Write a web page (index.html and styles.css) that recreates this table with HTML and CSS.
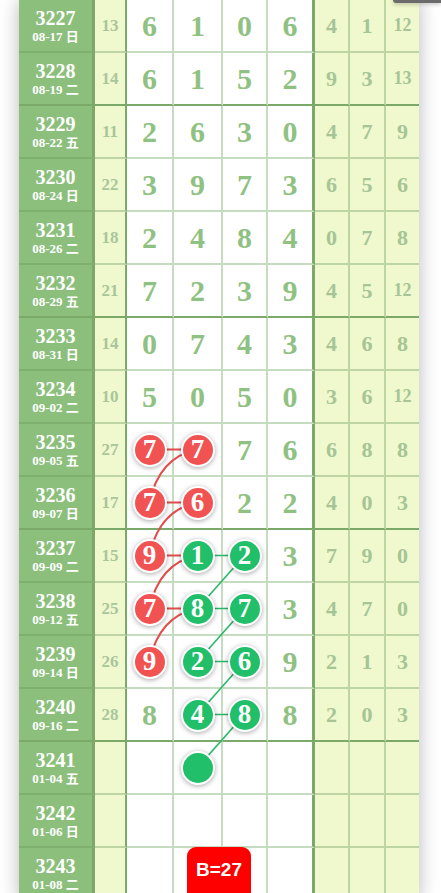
FILE: index.html
```html
<!DOCTYPE html>
<html lang="zh">
<head>
  <meta charset="UTF-8" />
  <meta name="viewport" content="width=device-width, initial-scale=1.0" />
  <title>走势图</title>
  <link rel="stylesheet" href="styles.css">
</head>
<body>
  <div class="topbtn"></div>

  <div class="board">
    <div class="row">
      <div class="c id"><b>3227</b><small>08-17 日</small></div>
      <div class="c sum">13</div>
      <div class="c n">6</div><div class="c n">1</div><div class="c n">0</div><div class="c n last">6</div>
      <div class="c r">4</div><div class="c r">1</div><div class="c r end two">12</div>
    </div>
    <div class="row grp">
      <div class="c id"><b>3228</b><small>08-19 二</small></div>
      <div class="c sum">14</div>
      <div class="c n">6</div><div class="c n">1</div><div class="c n">5</div><div class="c n last">2</div>
      <div class="c r">9</div><div class="c r">3</div><div class="c r end two">13</div>
    </div>
    <div class="row">
      <div class="c id"><b>3229</b><small>08-22 五</small></div>
      <div class="c sum">11</div>
      <div class="c n">2</div><div class="c n">6</div><div class="c n">3</div><div class="c n last">0</div>
      <div class="c r">4</div><div class="c r">7</div><div class="c r end">9</div>
    </div>
    <div class="row">
      <div class="c id"><b>3230</b><small>08-24 日</small></div>
      <div class="c sum">22</div>
      <div class="c n">3</div><div class="c n">9</div><div class="c n">7</div><div class="c n last">3</div>
      <div class="c r">6</div><div class="c r">5</div><div class="c r end">6</div>
    </div>
    <div class="row">
      <div class="c id"><b>3231</b><small>08-26 二</small></div>
      <div class="c sum">18</div>
      <div class="c n">2</div><div class="c n">4</div><div class="c n">8</div><div class="c n last">4</div>
      <div class="c r">0</div><div class="c r">7</div><div class="c r end">8</div>
    </div>
    <div class="row grp">
      <div class="c id"><b>3232</b><small>08-29 五</small></div>
      <div class="c sum">21</div>
      <div class="c n">7</div><div class="c n">2</div><div class="c n">3</div><div class="c n last">9</div>
      <div class="c r">4</div><div class="c r">5</div><div class="c r end two">12</div>
    </div>
    <div class="row">
      <div class="c id"><b>3233</b><small>08-31 日</small></div>
      <div class="c sum">14</div>
      <div class="c n">0</div><div class="c n">7</div><div class="c n">4</div><div class="c n last">3</div>
      <div class="c r">4</div><div class="c r">6</div><div class="c r end">8</div>
    </div>
    <div class="row">
      <div class="c id"><b>3234</b><small>09-02 二</small></div>
      <div class="c sum">10</div>
      <div class="c n">5</div><div class="c n">0</div><div class="c n">5</div><div class="c n last">0</div>
      <div class="c r">3</div><div class="c r">6</div><div class="c r end two">12</div>
    </div>
    <div class="row">
      <div class="c id"><b>3235</b><small>09-05 五</small></div>
      <div class="c sum">27</div>
      <div class="c n"><span class="ball red">7</span></div><div class="c n"><span class="ball red">7</span></div><div class="c n">7</div><div class="c n last">6</div>
      <div class="c r">6</div><div class="c r">8</div><div class="c r end">8</div>
    </div>
    <div class="row grp">
      <div class="c id"><b>3236</b><small>09-07 日</small></div>
      <div class="c sum">17</div>
      <div class="c n"><span class="ball red">7</span></div><div class="c n"><span class="ball red">6</span></div><div class="c n">2</div><div class="c n last">2</div>
      <div class="c r">4</div><div class="c r">0</div><div class="c r end">3</div>
    </div>
    <div class="row">
      <div class="c id"><b>3237</b><small>09-09 二</small></div>
      <div class="c sum">15</div>
      <div class="c n"><span class="ball red">9</span></div><div class="c n"><span class="ball green">1</span></div><div class="c n"><span class="ball green">2</span></div><div class="c n last">3</div>
      <div class="c r">7</div><div class="c r">9</div><div class="c r end">0</div>
    </div>
    <div class="row">
      <div class="c id"><b>3238</b><small>09-12 五</small></div>
      <div class="c sum">25</div>
      <div class="c n"><span class="ball red">7</span></div><div class="c n"><span class="ball green">8</span></div><div class="c n"><span class="ball green">7</span></div><div class="c n last">3</div>
      <div class="c r">4</div><div class="c r">7</div><div class="c r end">0</div>
    </div>
    <div class="row">
      <div class="c id"><b>3239</b><small>09-14 日</small></div>
      <div class="c sum">26</div>
      <div class="c n"><span class="ball red">9</span></div><div class="c n"><span class="ball green">2</span></div><div class="c n"><span class="ball green">6</span></div><div class="c n last">9</div>
      <div class="c r">2</div><div class="c r">1</div><div class="c r end">3</div>
    </div>
    <div class="row grp">
      <div class="c id"><b>3240</b><small>09-16 二</small></div>
      <div class="c sum">28</div>
      <div class="c n">8</div><div class="c n"><span class="ball green">4</span></div><div class="c n"><span class="ball green">8</span></div><div class="c n last">8</div>
      <div class="c r">2</div><div class="c r">0</div><div class="c r end">3</div>
    </div>
    <div class="row">
      <div class="c id"><b>3241</b><small>01-04 五</small></div>
      <div class="c sum"></div>
      <div class="c n"></div><div class="c n"><span class="ball green"></span></div><div class="c n"></div><div class="c n last"></div>
      <div class="c r"></div><div class="c r"></div><div class="c r end"></div>
    </div>
    <div class="row">
      <div class="c id"><b>3242</b><small>01-06 日</small></div>
      <div class="c sum"></div>
      <div class="c n"></div><div class="c n"></div><div class="c n"></div><div class="c n last"></div>
      <div class="c r"></div><div class="c r"></div><div class="c r end"></div>
    </div>
    <div class="row">
      <div class="c id"><b>3243</b><small>01-08 二</small></div>
      <div class="c sum"></div>
      <div class="c n"></div><div class="c n"></div><div class="c n"></div><div class="c n last"></div>
      <div class="c r"></div><div class="c r"></div><div class="c r end"></div>
    </div>

    <!-- connecting lines, board coordinates -->
    <svg class="links" width="400" height="901" viewBox="0 0 400 901">
      <g stroke="#e44c4c" stroke-width="2" fill="none">
        <line x1="130.5" y1="449.5" x2="178.5" y2="449.5"/>
        <line x1="130.5" y1="502.5" x2="178.5" y2="502.5"/>
        <line x1="130.5" y1="555.5" x2="178.5" y2="555.5"/>
        <line x1="130.5" y1="608.5" x2="178.5" y2="608.5"/>
        <path d="M178.5 449.5 Q140 457 130.5 502.5"/>
        <path d="M178.5 502.5 Q140 510 130.5 555.5"/>
        <path d="M178.5 555.5 Q140 563 130.5 608.5"/>
        <path d="M178.5 608.5 Q140 616 130.5 661.5"/>
      </g>
      <g stroke="#27b868" stroke-width="1.6" fill="none">
        <line x1="178.5" y1="555.5" x2="225.5" y2="555.5"/>
        <line x1="178.5" y1="608.5" x2="225.5" y2="608.5"/>
        <line x1="178.5" y1="661.5" x2="225.5" y2="661.5"/>
        <line x1="178.5" y1="714.5" x2="225.5" y2="714.5"/>
        <line x1="225.5" y1="555.5" x2="178.5" y2="608.5"/>
        <line x1="225.5" y1="608.5" x2="178.5" y2="661.5"/>
        <line x1="225.5" y1="661.5" x2="178.5" y2="714.5"/>
        <line x1="225.5" y1="714.5" x2="178.5" y2="767.5"/>
      </g>
    </svg>
  </div>

  <div class="badge">B=27</div>
</body>
</html>
```

FILE: styles.css
```css
body { margin: 0; background: #fff; font-family: "Liberation Serif", "Noto Sans CJK SC", serif; overflow: hidden; }

.board { position: relative; width: 400px; margin-left: 19px; box-shadow: 0 0 18px rgba(0,0,0,.28); }
.row { display: grid; grid-template-columns: 76px 32px 47px 49px 45px 47px 35px 36px 33px; height: 53px; }

.c { box-sizing: border-box; height: 53px; display: flex; align-items: center; justify-content: center; font-weight: bold;
     border-right: 2px solid #c6dcc0; border-bottom: 2px solid #c6dcc0; background: #fff; }

.id { flex-direction: column; background: #8cbf7c; color: #fff; border-right: 3px solid #7aa96a; border-bottom-color: #80b070; }
.id b { font-size: 20px; line-height: 20px; }
.id small { font-size: 13px; line-height: 15px; margin-top: 1px; white-space: nowrap; }

.sum { background: #f0f8cd; color: #a9c69b; font-size: 17px; border-right-color: #7aa96a; border-bottom-color: #bcd5a3; }
.n { color: #8fc282; font-size: 30px; }
.n.last { border-right: 3px solid #7aa96a; }
.r { background: #f0f8cd; color: #a5c596; font-size: 22px; border-right-color: #bcd5a3; border-bottom-color: #bcd5a3; }
.r.two { font-size: 18px; }
.r.end { border-right: 0; }

.grp .c { border-bottom-color: #7aa96a; }

.ball { position: relative; z-index: 2; box-sizing: border-box; width: 34px; height: 34px; border-radius: 50%; border: 2px solid #fff;
        display: flex; align-items: center; justify-content: center; color: #fff; font-size: 27px; line-height: 1;
        box-shadow: 0 1px 5px rgba(0,0,0,.35); }
.red { background: #f15252; }
.green { background: #22bf6a; }

.links { position: absolute; left: 0; top: 0; z-index: 1; pointer-events: none; }

.badge { position: fixed; left: 187px; top: 847px; width: 64px; height: 60px; box-sizing: border-box; padding-top: 13px;
         background: #f00; color: #fff; border-radius: 9px; text-align: center; font: bold 19px/19px "Liberation Sans", Arial, sans-serif; z-index: 5; }
.topbtn { position: fixed; top: 0; right: 0; width: 48px; height: 3px; background: #6b6b6b; border-bottom-left-radius: 6px;
          box-shadow: 0 1px 4px rgba(0,0,0,.3); z-index: 5; }
```
